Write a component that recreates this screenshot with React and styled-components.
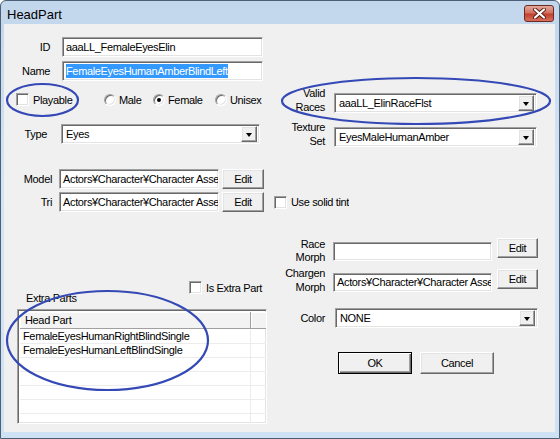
import React from "react";
import styled, { createGlobalStyle } from "styled-components";

const GlobalStyle = createGlobalStyle`
  html, body {
    margin: 0;
    padding: 0;
    background: #fff;
  }
  body {
    font-family: "Liberation Sans", Arial, sans-serif;
    font-size: 11px;
    letter-spacing: -0.35px;
    color: #000;
  }
`;

const Window = styled.div`
  width: 560px;
  height: 439px;
  box-sizing: border-box;
  display: flex;
  flex-direction: column;
  background: linear-gradient(#c2d6ec, #d3e4f5 40%, #cfe2f3);
  border: 1px solid #4d5f74;
  border-radius: 6px 6px 0 0;
  overflow: hidden;
`;

const TitleBar = styled.div`
  height: 23px;
  flex-shrink: 0;
  display: flex;
  align-items: flex-start;
  padding: 0 5px 0 6px;
`;

const Title = styled.div`
  font-size: 13px;
  letter-spacing: 0;
  line-height: 14px;
  margin-top: 7px;
`;

const CloseButton = styled.div`
  margin: 4px 0 0 auto;
  width: 30px;
  height: 17px;
  box-sizing: border-box;
  border: 1px solid #6b2a22;
  border-radius: 3px;
  background: linear-gradient(#e4a89c, #d27160 45%, #c2402f 55%, #d8705c);
  display: flex;
  align-items: center;
  justify-content: center;
`;

const Client = styled.div`
  flex: 1;
  margin: 0 4px 6px 3px;
  background: #f0f0f0;
  position: relative;
  display: flex;
  flex-direction: column;
`;

const Stack = styled.div`
  display: flex;
  flex-direction: column;
  flex: ${({ $grow }) => ($grow ? 1 : "none")};
  gap: ${({ $gap }) => $gap || 0}px;
  margin-top: ${({ $top }) => $top || 0}px;
  width: ${({ $width }) => ($width ? `${$width}px` : "auto")};
`;

const Split = styled.div`
  display: flex;
  align-items: flex-start;
  flex: none;
`;

const Row = styled.div`
  display: flex;
  align-items: ${({ $align }) => $align || "center"};
  margin-top: ${({ $top }) => $top || 0}px;
  padding-left: ${({ $left }) => $left || 0}px;
  gap: ${({ $gap }) => $gap || 0}px;
`;

const Label = styled.div`
  width: ${({ $width }) => $width}px;
  margin-right: ${({ $gap }) => $gap || 0}px;
  margin-top: ${({ $shift }) => $shift || 0}px;
  text-align: right;
  line-height: ${({ $lh }) => $lh || 13}px;
  white-space: nowrap;
  flex-shrink: 0;
`;

const sunken = `
  box-sizing: border-box;
  background: #fff;
  border: 1px solid;
  border-color: #a0a0a0 #fff #fff #a0a0a0;
  box-shadow: inset 1px 1px 0 #696969, inset -1px -1px 0 #e3e3e3;
`;

const raised = `
  box-sizing: border-box;
  background: #f0f0f0;
  border: 1px solid;
  border-color: #fff #696969 #696969 #fff;
  box-shadow: inset -1px -1px 0 #a0a0a0, inset 1px 1px 0 #e3e3e3;
`;

const TextBox = styled.div`
  ${sunken}
  width: ${({ $width }) => $width}px;
  height: ${({ $height }) => $height || 20}px;
  margin-top: ${({ $top }) => $top || 0}px;
  padding: 0 3px;
  line-height: ${({ $height }) => ($height || 20) - 2}px;
  white-space: nowrap;
  overflow: hidden;
  flex-shrink: 0;
`;

const Selected = styled.span`
  background: #3399ff;
  color: #fff;
  padding: 1px 0;
`;

const Combo = styled.div`
  ${sunken}
  width: ${({ $width }) => $width}px;
  height: 20px;
  margin-bottom: ${({ $bottom }) => $bottom || 0}px;
  display: flex;
  align-items: center;
  padding: 2px 2px 2px 4px;
  flex-shrink: 0;
`;

const ComboText = styled.div`
  flex: 1;
  white-space: nowrap;
  overflow: hidden;
`;

const DropButton = styled.div`
  ${raised}
  width: 16px;
  height: 16px;
  display: flex;
  align-items: center;
  justify-content: center;

  &::after {
    content: "";
    border-left: 3.5px solid transparent;
    border-right: 3.5px solid transparent;
    border-top: 4px solid #000;
    margin-top: 1px;
  }
`;

const Button = styled.div`
  ${raised}
  width: ${({ $width }) => $width}px;
  height: ${({ $height }) => $height || 20}px;
  margin-left: ${({ $left }) => $left || 0}px;
  display: flex;
  align-items: center;
  justify-content: center;
  flex-shrink: 0;
  ${({ $default }) =>
    $default &&
    `
    border: 1px solid #000;
    box-shadow: inset 1px 1px 0 #fff, inset -1px -1px 0 #696969, inset -2px -2px 0 #a0a0a0;
  `}
`;

const CheckItem = styled.div`
  display: flex;
  align-items: center;
  height: 13px;
  width: ${({ $width }) => ($width ? `${$width}px` : "auto")};
  margin-left: ${({ $left }) => $left || 0}px;
  overflow: hidden;
  white-space: nowrap;
  flex-shrink: 0;
`;

const Box = styled.div`
  ${sunken}
  width: 13px;
  height: 13px;
  flex-shrink: 0;
  margin-right: 4px;
`;

const Radio = styled.div`
  ${sunken}
  width: 12px;
  height: 12px;
  border-radius: 50%;
  flex-shrink: 0;
  margin-right: 3px;
  display: flex;
  align-items: center;
  justify-content: center;

  &::after {
    content: "";
    width: 4px;
    height: 4px;
    border-radius: 50%;
    background: ${({ $on }) => ($on ? "#000" : "transparent")};
  }
`;

const CaptionLine = styled.div`
  line-height: 13px;
  padding-left: ${({ $left }) => $left || 0}px;
  margin-top: ${({ $top }) => $top || 0}px;
`;

const ListBox = styled.div`
  ${sunken}
  margin: 4px 0 0 13px;
  width: 250px;
  height: 115px;
  padding: 2px 0 0 2px;
  overflow: hidden;
`;

const ListHeader = styled.div`
  display: flex;
  height: 17px;
`;

const HeaderCell = styled.div`
  width: ${({ $width }) => $width}px;
  flex-shrink: 0;
  box-sizing: border-box;
  background: #f3f3f3;
  border-right: 1px solid #a0a0a0;
  border-bottom: 1px solid #a0a0a0;
  box-shadow: inset 1px 1px 0 #fff;
  padding-left: 5px;
  line-height: 16px;
`;

const ListBody = styled.div`
  padding-top: 1px;
`;

const ListRow = styled.div`
  display: flex;
  height: 14px;
  box-sizing: border-box;
  border-bottom: 1px solid #ececec;
`;

const ListCell = styled.div`
  width: ${({ $width }) => $width}px;
  flex-shrink: 0;
  box-sizing: border-box;
  border-right: 1px solid #ececec;
  padding-left: 3px;
  line-height: 13px;
  white-space: nowrap;
`;

const Mark = styled.svg`
  position: absolute;
  left: ${({ $x }) => $x}px;
  top: ${({ $y }) => $y}px;
  width: ${({ $w }) => $w}px;
  height: ${({ $h }) => $h}px;
  overflow: visible;
  pointer-events: none;
`;

const Ellipse = ({ x, y, w, h }) => (
  <Mark $x={x} $y={y} $w={w} $h={h} viewBox={`0 0 ${w} ${h}`}>
    <ellipse
      cx={w / 2}
      cy={h / 2}
      rx={w / 2 - 1}
      ry={h / 2 - 1}
      fill="none"
      stroke="#3449b5"
      strokeWidth="2.2"
    />
  </Mark>
);

const Dropdown = ({ width, value, bottom }) => (
  <Combo $width={width} $bottom={bottom}>
    <ComboText>{value}</ComboText>
    <DropButton />
  </Combo>
);

const rows = [
  "FemaleEyesHumanRightBlindSingle",
  "FemaleEyesHumanLeftBlindSingle",
  "",
  "",
  "",
  "",
  "",
];

export default function App() {
  return (
    <>
      <GlobalStyle />
      <Window>
        <TitleBar>
          <Title>HeadPart</Title>
          <CloseButton>
            <svg width="13" height="11" viewBox="0 0 13 11">
              <path d="M2 1.5 L11 9.5 M11 1.5 L2 9.5" stroke="#5a1e16" strokeWidth="4" strokeLinecap="round" />
              <path d="M2 1.5 L11 9.5 M11 1.5 L2 9.5" stroke="#fff" strokeWidth="2.2" strokeLinecap="round" />
            </svg>
          </CloseButton>
        </TitleBar>
        <Client>
          <Stack $top={13} $gap={4}>
            <Row>
              <Label $width={46} $gap={12}>ID</Label>
              <TextBox $width={201}>aaaLL_FemaleEyesElin</TextBox>
            </Row>
            <Row>
              <Label $width={46} $gap={12}>Name</Label>
              <TextBox $width={201}>
                <Selected>FemaleEyesHumanAmberBlindLeft</Selected>
              </TextBox>
            </Row>
          </Stack>

          <Split>
            <Stack $width={276}>
              <Row $top={12} $left={12}>
                <CheckItem $width={88}>
                  <Box />
                  Playable
                </CheckItem>
                <CheckItem $width={49}>
                  <Radio />
                  Male
                </CheckItem>
                <CheckItem $width={62}>
                  <Radio $on />
                  Female
                </CheckItem>
                <CheckItem>
                  <Radio />
                  Unisex
                </CheckItem>
              </Row>
              <Row $top={18}>
                <Label $width={43} $gap={14}>Type</Label>
                <Dropdown width={199} value="Eyes" />
              </Row>
            </Stack>
            <Stack $grow>
              <Row $top={5} $align="flex-end">
                <Label $width={45} $gap={9} $lh={14}>
                  Valid
                  <br />
                  Races
                </Label>
                <Dropdown width={203} value="aaaLL_ElinRaceFlst" bottom={1} />
              </Row>
              <Row $top={6} $align="flex-end">
                <Label $width={45} $gap={9} $lh={14}>
                  Texture
                  <br />
                  Set
                </Label>
                <Dropdown width={203} value="EyesMaleHumanAmber" bottom={1} />
              </Row>
            </Stack>
          </Split>

          <Stack $top={21} $gap={3}>
            <Row>
              <Label $width={48} $gap={7}>Model</Label>
              <TextBox $width={160}>Actors¥Character¥Character Assets</TextBox>
              <Button $width={42} $left={3}>Edit</Button>
            </Row>
            <Row>
              <Label $width={48} $gap={7}>Tri</Label>
              <TextBox $width={160}>Actors¥Character¥Character Assets</TextBox>
              <Button $width={42} $left={3}>Edit</Button>
              <CheckItem $left={10}>
                <Box />
                Use solid tint
              </CheckItem>
            </Row>
          </Stack>

          <Split>
            <Stack $width={276}>
              <Row $top={69} $left={185}>
                <CheckItem $width={78}>
                  <Box />
                  Is Extra Part
                </CheckItem>
              </Row>
              <CaptionLine $left={22} $top={-2}>
                Extra Parts
              </CaptionLine>
              <ListBox>
                <ListHeader>
                  <HeaderCell $width={231}>Head Part</HeaderCell>
                  <HeaderCell $width={40} />
                </ListHeader>
                <ListBody>
                  {rows.map((r, i) => (
                    <ListRow key={i}>
                      <ListCell $width={231}>{r}</ListCell>
                      <ListCell $width={40} />
                    </ListRow>
                  ))}
                </ListBody>
              </ListBox>
            </Stack>
            <Stack $grow>
              <Row $top={26} $align="flex-start">
                <Label $width={45} $gap={8} $lh={13}>
                  Race
                  <br />
                  Morph
                </Label>
                <TextBox $width={159} $height={19} $top={4} />
                <Button $width={41} $left={5}>Edit</Button>
              </Row>
              <Row $top={5} $align="flex-start">
                <Label $width={45} $gap={8} $lh={14} $shift={-3}>
                  Chargen
                  <br />
                  Morph
                </Label>
                <TextBox $width={159} $height={19} $top={4}>
                  Actors¥Character¥Character Assets
                </TextBox>
                <Button $width={41} $left={5}>Edit</Button>
              </Row>
              <Row $top={14}>
                <Label $width={45} $gap={10}>Color</Label>
                <Dropdown width={203} value="NONE" />
              </Row>
              <Row $top={24} $left={58} $gap={8}>
                <Button $width={74} $height={22} $default>OK</Button>
                <Button $width={74} $height={22}>Cancel</Button>
              </Row>
            </Stack>
          </Split>

          <Ellipse x={2} y={59} w={73} h={34} />
          <Ellipse x={277} y={53} w={270} h={48} />
          <Ellipse x={2} y={266} w={203} h={101} />
        </Client>
      </Window>
    </>
  );
}
